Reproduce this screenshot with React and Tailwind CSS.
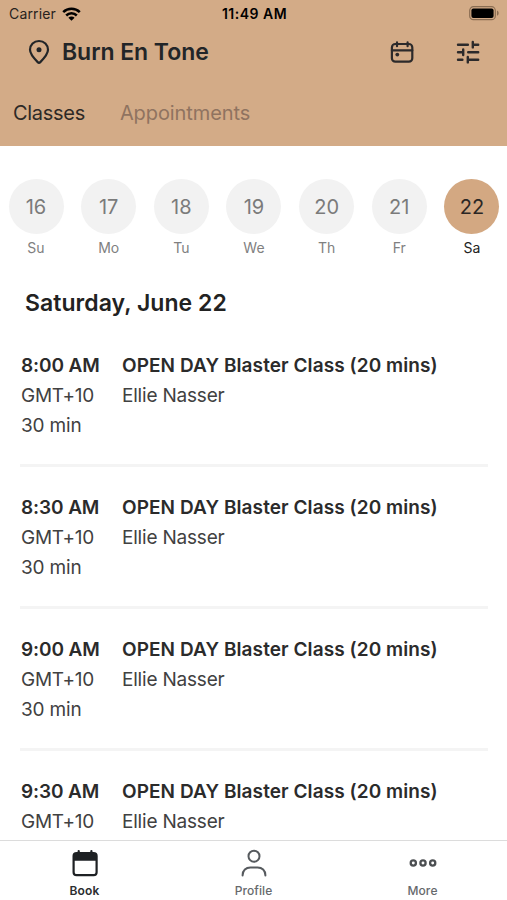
import React, { useState } from 'react';

const DAYS = [
    { date: 16, label: 'Su' },
    { date: 17, label: 'Mo' },
    { date: 18, label: 'Tu' },
    { date: 19, label: 'We' },
    { date: 20, label: 'Th' },
    { date: 21, label: 'Fr' },
    { date: 22, label: 'Sa' },
];

const TITLE = 'OPEN DAY Blaster Class (20 mins)';

const CLASSES = [
    { time: '8:00 AM', zone: 'GMT+10', duration: '30 min', title: TITLE, teacher: 'Ellie Nasser' },
    { time: '8:30 AM', zone: 'GMT+10', duration: '30 min', title: TITLE, teacher: 'Ellie Nasser' },
    { time: '9:00 AM', zone: 'GMT+10', duration: '30 min', title: TITLE, teacher: 'Ellie Nasser' },
    { time: '9:30 AM', zone: 'GMT+10', title: TITLE, teacher: 'Ellie Nasser' },
];

const WifiIcon = () => (
    <svg width="19" height="14" viewBox="0 0 19 14" fill="none" stroke="#000" strokeWidth="2.5">
        <path d="M1.2 5.2a11.8 11.8 0 0 1 16.6 0" />
        <path d="M4.2 8.5a7.5 7.5 0 0 1 10.6 0" />
        <path d="M9.5 13.8 6.4 10.7a4.4 4.4 0 0 1 6.2 0Z" fill="#000" stroke="none" />
    </svg>
);

const BatteryIcon = () => (
    <svg width="31" height="15" viewBox="0 0 31 15">
        <rect x="0.7" y="0.7" width="25.6" height="13" rx="3.8" fill="none" stroke="#8a6d52" strokeWidth="1.2" />
        <rect x="2.4" y="2.4" width="22.2" height="9.6" rx="2" fill="#000" />
        <path d="M28 4.6c2.2.8 2.2 4.4 0 5.2Z" fill="#8a6d52" />
    </svg>
);

const PinIcon = () => (
    <svg width="22" height="26" viewBox="0 0 22 26" fill="none" stroke="#222528" strokeWidth="2.2">
        <path d="M11 2c-5.1 0-9 3.8-9 8.8 0 4 2.7 7.3 7.7 12.3.8.8 1.8.8 2.6 0 5-5 7.7-8.3 7.7-12.3 0-5-3.9-8.8-9-8.8Z" />
        <circle cx="11" cy="10.7" r="2.5" fill="#222528" stroke="none" />
    </svg>
);

const CalendarIcon = () => (
    <svg width="24" height="22" viewBox="0 0 24 22" fill="none" stroke="#2c2a2b" strokeWidth="2.2" strokeLinecap="round">
        <rect x="1.9" y="3" width="20.4" height="17.6" rx="3.4" />
        <path d="M1.9 9.3h20.4M7 1.4v3.8M17.6 1.4v3.8" />
        <circle cx="7.3" cy="13.6" r="1.9" fill="#2c2a2b" stroke="none" />
    </svg>
);

const FilterIcon = () => (
    <svg width="24" height="24" viewBox="0 0 24 24" fill="none" stroke="#2c2a2b" strokeWidth="2.4" strokeLinecap="round">
        <path d="M2 4.7h9.9M16.8 4.7h5.4M16.8 2v5.4" />
        <path d="M2 12.2h5.2M7.2 9.4v5.6M12.2 12.2h10" />
        <path d="M2 19.7h4.4M11.8 19.7h10.4M11.8 17v5.4" />
    </svg>
);

const BookIcon = () => (
    <svg width="26" height="28" viewBox="0 0 26 28" fill="none" stroke="#1e2124" strokeWidth="2.2">
        <rect x="1.6" y="4" width="23" height="22.2" rx="3" />
        <path d="M1.6 11.8V7a3 3 0 0 1 3-3h17a3 3 0 0 1 3 3v4.8Z" fill="#1e2124" stroke="none" />
        <path d="M6.7 2.1v3M19.4 2.1v3" strokeLinecap="round" />
    </svg>
);

const ProfileIcon = () => (
    <svg width="26" height="28" viewBox="0 0 26 28" fill="none" stroke="#565a5e" strokeWidth="2" strokeLinecap="round">
        <circle cx="13" cy="7.2" r="5.5" />
        <path d="M1.6 26.5v-.3C1.6 21.5 5 18.4 9.4 18.4h7.2c4.4 0 7.8 3.1 7.8 7.8v.3" />
    </svg>
);

const MoreIcon = () => (
    <svg width="28" height="8" viewBox="0 0 28 8" fill="none" stroke="#4c4f52" strokeWidth="2.3">
        <circle cx="4.3" cy="4" r="2.6" />
        <circle cx="14" cy="4" r="2.6" />
        <circle cx="23.7" cy="4" r="2.6" />
    </svg>
);

const TABS = [
    { name: 'Book', icon: BookIcon },
    { name: 'Profile', icon: ProfileIcon },
    { name: 'More', icon: MoreIcon },
];

const ClassRow = ({ item }) => (
    <li className="flex h-[142px] shrink-0 border-b-[3px] border-[#f4f4f4] pt-[26px] text-[19px] leading-[29.8px] text-[#414141]">
        <div className="w-[101px] shrink-0 pl-px">
            <p className="font-semibold tracking-[-0.1px] text-[#2b2b2b] whitespace-nowrap">{item.time}</p>
            <p className="tracking-[-0.25px]">{item.zone}</p>
            {item.duration && <p className="tracking-[-0.15px]">{item.duration}</p>}
        </div>
        <div className="pl-px">
            <p className="font-semibold tracking-[0.08px] text-[#2b2b2b] whitespace-nowrap">{item.title}</p>
            <p className="tracking-[-0.2px]">{item.teacher}</p>
        </div>
    </li>
);

const App = () => {
    const [selected, setSelected] = useState(22);
    const [activeTab, setActiveTab] = useState('Book');

    return (
        <div className="flex h-[900px] w-[507px] flex-col overflow-hidden bg-white font-['Inter','Liberation_Sans',sans-serif]">
            <header className="flex h-[146px] shrink-0 flex-col bg-[#d3ab87]">
                {/* Status bar */}
                <div className="grid h-[27px] grid-cols-3 items-center pl-[9px] pr-[7px] text-[14px] text-black">
                    <div className="flex items-center gap-[6px]">
                        <span className="tracking-[0.15px] text-[#28221d]">Carrier</span>
                        <WifiIcon />
                    </div>
                    <span className="text-center font-semibold tracking-[0.5px]">11:49 AM</span>
                    <div className="flex justify-end"><BatteryIcon /></div>
                </div>

                {/* Location and actions */}
                <div className="flex h-[50px] items-center pl-7 pr-[27px]">
                    <PinIcon />
                    <h1 className="ml-3 pt-px text-[23px] font-semibold tracking-[-0.05px] text-[#222528]">Burn En Tone</h1>
                    <div className="ml-auto flex items-center gap-[42px]">
                        <button type="button" aria-label="Calendar"><CalendarIcon /></button>
                        <button type="button" aria-label="Filters"><FilterIcon /></button>
                    </div>
                </div>

                <nav className="flex flex-1 items-center gap-[35px] pl-[13px] pt-[3px] text-[20px]">
                    <span className="tracking-[-0.3px] text-[#2d2926]">Classes</span>
                    <span className="tracking-[-0.1px] text-[#8f7360]">Appointments</span>
                </nav>
            </header>

            {/* Week strip */}
            <div className="flex shrink-0 justify-between pl-[8.5px] pr-[7.5px] pt-[33px]">
                {DAYS.map(day => (
                    <button key={day.date} type="button" onClick={() => setSelected(day.date)} className="flex flex-col items-center">
                        <span className={`flex size-[55px] items-center justify-center rounded-full text-[20px] ${selected === day.date ? 'bg-[#d3a882] text-[#2b2725]' : 'bg-[#f2f2f2] text-[#7b7b7b]'}`}>
                            {day.date}
                        </span>
                        <span className={`mt-1 text-[14px] leading-5 ${selected === day.date ? 'text-[#222222]' : 'text-[#808080]'}`}>{day.label}</span>
                    </button>
                ))}
            </div>

            <h2 className="mt-[29px] shrink-0 pl-[25px] text-[23px] font-semibold leading-8 tracking-[0.05px] text-[#222222]">Saturday, June 22</h2>

            <ul className="mt-[6px] flex min-h-0 flex-1 flex-col overflow-hidden pl-5 pr-[19px]">
                {CLASSES.map(item => <ClassRow key={item.time} item={item} />)}
            </ul>

            <footer className="grid h-[60px] shrink-0 grid-cols-3 border-t border-[#dcdcdc] bg-white">
                {TABS.map(({ name, icon: Icon }) => (
                    <button key={name} type="button" onClick={() => setActiveTab(name)} className="flex flex-col items-center">
                        <span className="mt-[8px] flex h-7 items-center"><Icon /></span>
                        <span className={`mt-[6px] text-[12px] leading-4 tracking-[0.1px] ${activeTab === name ? 'font-semibold text-[#2b2d2f]' : 'font-medium text-[#66696c]'}`}>{name}</span>
                    </button>
                ))}
            </footer>
        </div>
    );
};

export default App;
